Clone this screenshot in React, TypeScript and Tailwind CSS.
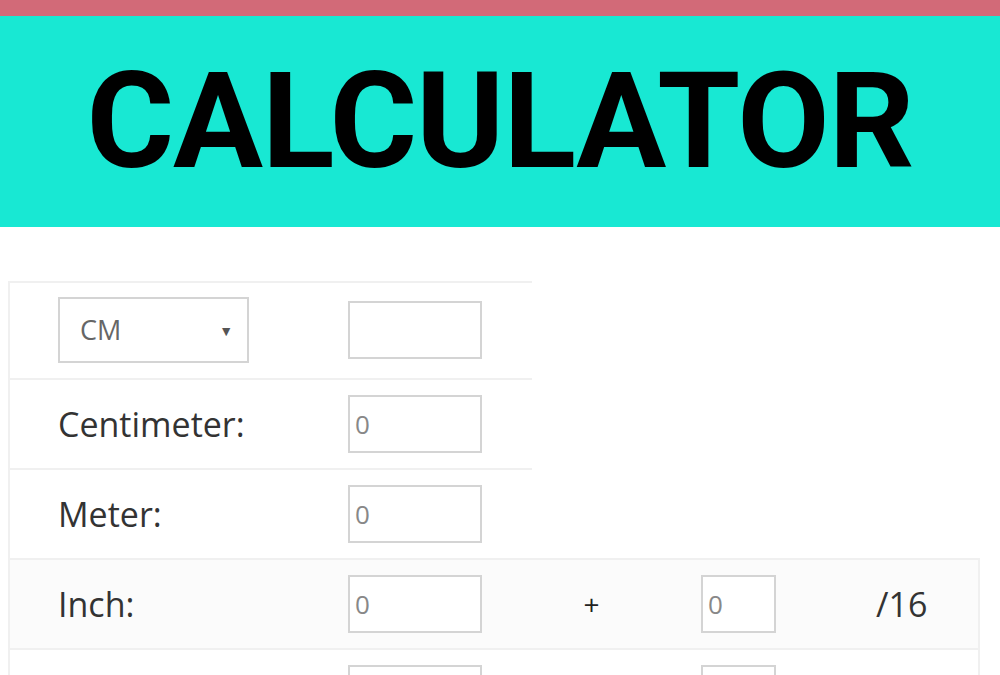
import React from "react";

const label = "text-[34px] leading-none text-[#333] [font-family:'Open_Sans',sans-serif]";
const box = "h-[58px] border-2 border-[#d4d4d4] bg-white px-[5px] text-[26px] text-[#888] outline-none [font-family:'Open_Sans',sans-serif]";

function Row({ children, wide, shade, first }: { children: React.ReactNode; wide?: boolean; shade?: boolean; first?: boolean }) {
  return (
    <div
      className={`flex items-center border-t-2 border-[#f0f0f0] pl-[48px] ${first ? "pt-[14px] pb-[15px]" : "py-[15px]"} ${
        wide ? "w-[970px] border-r-2" : "w-[522px]"
      } ${shade ? "bg-[#fbfbfb]" : "bg-white"}`}
    >
      {children}
    </div>
  );
}

export default function App() {
  return (
    <div className="min-h-screen bg-white">
      <div className="h-[16px] bg-[#d26a78]" />
      <div className="flex h-[211px] items-center justify-center bg-[#18e8d3]">
        <h1 className="text-[134px] font-bold leading-none tracking-[-1px] text-black [font-family:Roboto,sans-serif]">
          CALCULATOR
        </h1>
      </div>

      <div className="ml-[8px] mt-[54px] border-l-2 border-[#f0f0f0]">
        <Row first>
          <div className="w-[290px]">
            <div className="flex h-[66px] w-[191px] items-center justify-between border-2 border-[#d4d4d4] pl-[20px] pr-[14px] text-[27px] text-[#666] [font-family:'Open_Sans',sans-serif]">
              <span>CM</span>
              <span className="text-[14px] text-[#555]">▼</span>
            </div>
          </div>
          <input className={`${box} w-[134px]`} defaultValue="" />
        </Row>
        <Row>
          <div className={`w-[290px] ${label}`}>Centimeter:</div>
          <input className={`${box} w-[134px]`} defaultValue="0" />
        </Row>
        <Row>
          <div className={`w-[290px] ${label}`}>Meter:</div>
          <input className={`${box} w-[134px]`} defaultValue="0" />
        </Row>
        <Row wide shade>
          <div className={`w-[290px] ${label}`}>Inch:</div>
          <input className={`${box} w-[134px]`} defaultValue="0" />
          <div className="w-[219px] text-center text-[28px] text-[#222] [font-family:'Open_Sans',sans-serif]">+</div>
          <input className={`${box} w-[75px]`} defaultValue="0" />
          <div className={`ml-[100px] ${label}`}>/16</div>
        </Row>
        <Row wide>
          <div className="w-[290px]" />
          <input className={`${box} w-[134px]`} defaultValue="" />
          <div className="w-[219px]" />
          <input className={`${box} w-[75px]`} defaultValue="" />
        </Row>
      </div>
    </div>
  );
}
